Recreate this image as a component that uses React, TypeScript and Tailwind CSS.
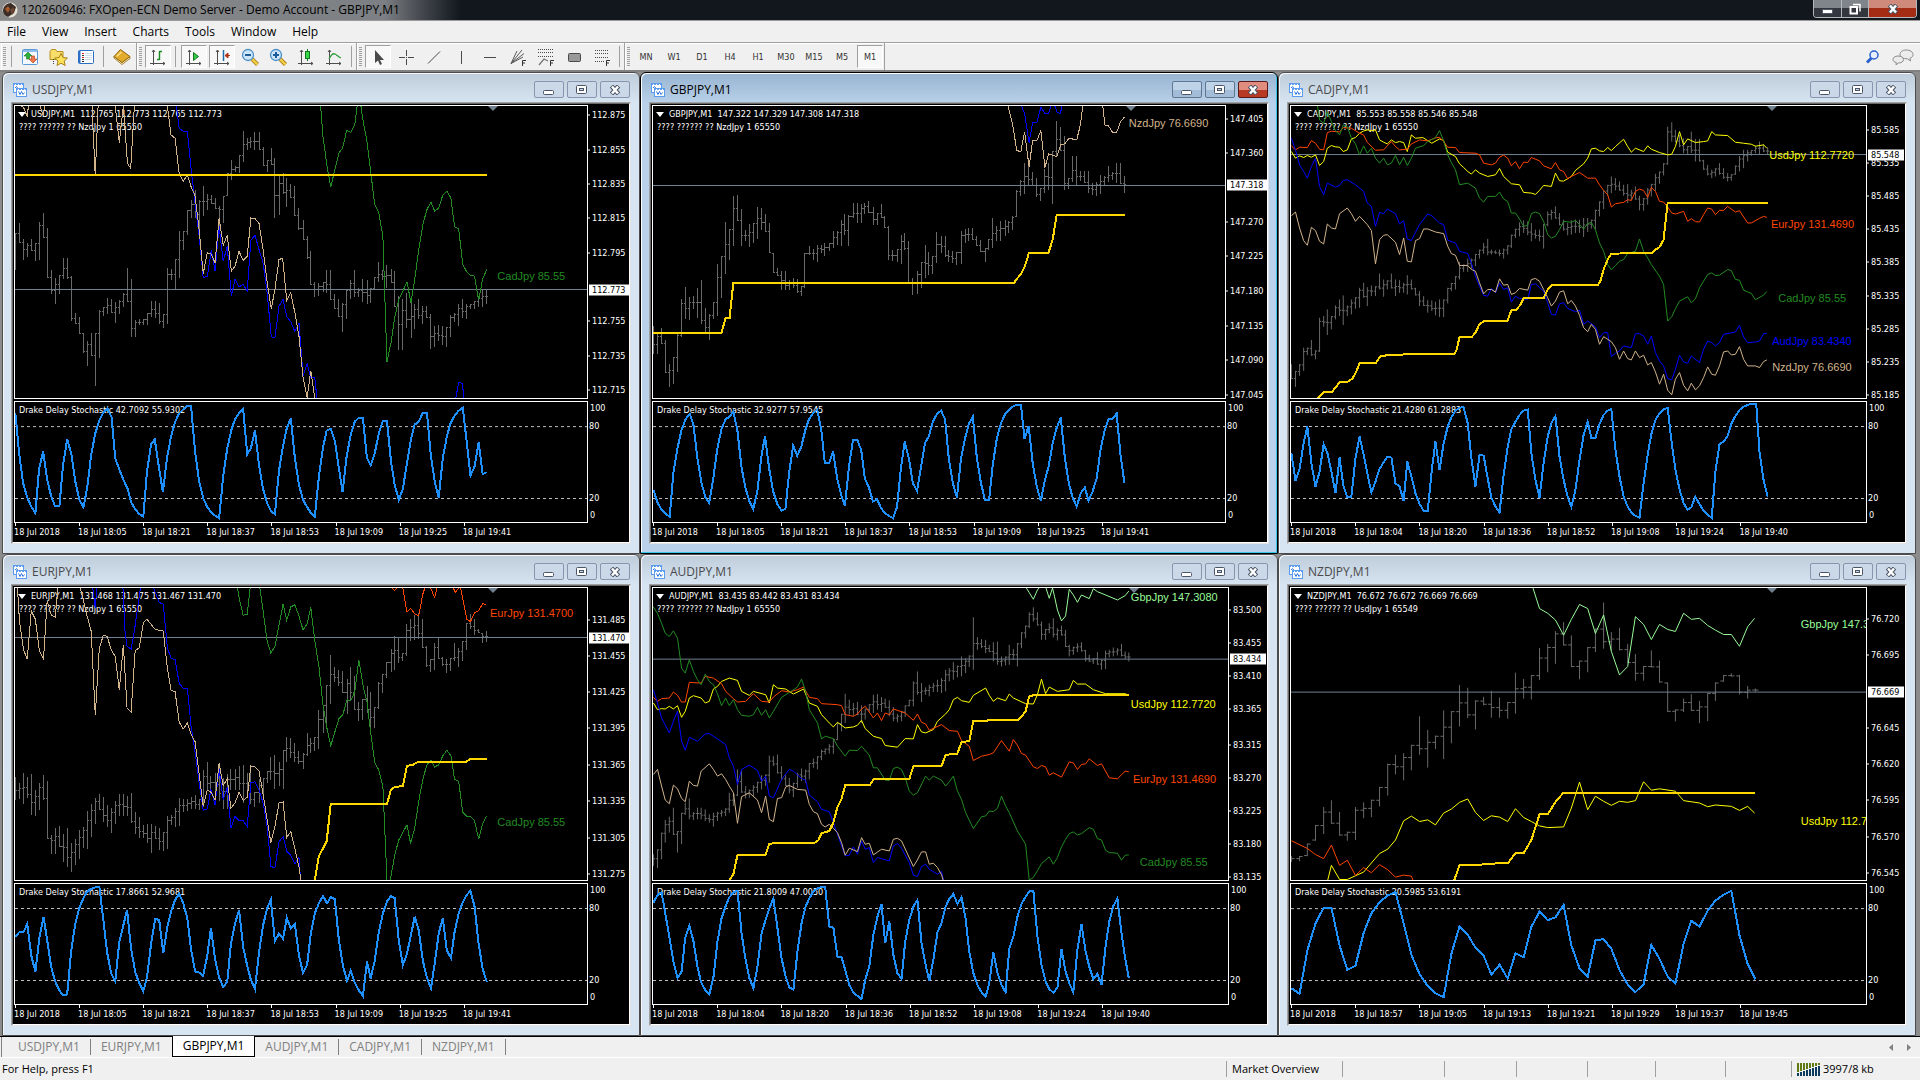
import type { ReactNode } from "react";
import clsx from "clsx";

/* ---------- chart data ---------- */

type Line = { color: string; width?: number; points: string };
type Mark = { text: string; y: number };
type Label = { text: string; color: string; x: number; y: number };

type Chart = {
  symbol: string;
  quote: string;
  note: string;
  stochastic: string;
  active?: boolean;
  // x, y, width, height of the price pane and of the oscillator pane
  view: [number, number, number, number];
  subView: [number, number, number, number];
  step: number;
  bars: string;
  lines: Line[];
  oscillator: string;
  scale: Mark[];
  last: Mark;
  labels: Label[];
  times: string[];
  markerX: number;
};

const GOLD = "#ffd700";
const YELLOW = "#ffff00";
const TAN = "#d2b48c";
const BLUE = "#0000ff";
const GREEN = "#228b22";
const ORANGE = "#ff4500";
const MINT = "#98fb98";

const ODD_TIMES = ["18 Jul 2018", "18 Jul 18:05", "18 Jul 18:21", "18 Jul 18:37", "18 Jul 18:53", "18 Jul 19:09", "18 Jul 19:25", "18 Jul 19:41"];
const EVEN_TIMES = ["18 Jul 2018", "18 Jul 18:04", "18 Jul 18:20", "18 Jul 18:36", "18 Jul 18:52", "18 Jul 19:08", "18 Jul 19:24", "18 Jul 19:40"];
const NZD_TIMES = ["18 Jul 2018", "18 Jul 18:57", "18 Jul 19:05", "18 Jul 19:13", "18 Jul 19:21", "18 Jul 19:29", "18 Jul 19:37", "18 Jul 19:45"];

const CHARTS: Chart[] = [
  {
    symbol: "USDJPY,M1",
    quote: "112.765 112.773 112.765 112.773",
    note: "???? ?????? ?? NzdJpy 1 65550",
    stochastic: "42.7092 55.9302",
    view: [37, 108, 1404, 879],
    subView: [37, 996, 1404, 360],
    step: 9.8,
    bars: "38 490 602;48 460 520;58 508 570;67 520 562;77 508 545;87 520 575;97 457 570;107 430 505;116 475 625;126 600 675;136 625 703;146 615 675;156 565 627;165 565 627;175 620 755;185 730 765;195 742 795;205 790 850;214 815 890;224 790 860;234 790 950;244 722 865;254 712 740;264 686 735;274 688 730;283 697 762;293 693 735;303 672 712;313 595 697;322 630 803;332 752 803;342 748 768;352 748 768;361 730 768;371 695 743;381 695 745;391 700 765;401 733 777;411 595 763;420 597 632;430 567 660;440 485 625;450 485 540;460 420 495;469 390 445;479 362 445;489 390 480;499 348 440;509 373 420;519 375 403;528 385 417;538 408 475;548 378 460;558 310 380;568 270 330;577 290 308;587 256 310;597 183 276;607 205 240;616 200 235;626 187 240;636 187 240;646 232 288;656 270 308;666 235 285;675 265 445;685 315 437;695 310 373;704 325 412;714 342 385;724 350 440;734 415 480;744 450 512;754 500 567;763 545 648;773 637 683;783 640 680;793 637 668;802 600 670;812 600 692;822 673 718;832 690 742;841 700 788;851 660 748;861 632 690;871 600 683;881 655 683;891 630 697;901 632 705;910 655 700;920 623 660;930 578 637;940 600 632;950 585 655;960 597 640;969 603 712;979 680 842;989 690 842;999 672 775;1009 695 805;1018 703 780;1028 690 750;1038 710 765;1048 710 745;1058 735 838;1067 770 833;1077 768 815;1087 770 827;1097 773 832;1107 738 803;1116 730 758;1126 703 770;1136 688 745;1146 703 748;1155 703 718;1165 695 718;1175 680 712;1185 660 712;1195 660 705",
    lines: [
      { color: GREEN, points: "787,107 793,200 803,290 812,352 822,300 832,250 841,235 851,182 861,187 871,165 877,107" },
      { color: GREEN, points: "886,107 891,150 901,215 910,305 920,405 930,430 940,500 950,878 960,820 969,745 979,690 989,665 999,637 1009,700 1018,630 1028,540 1038,465 1048,420 1058,397 1067,424 1077,415 1087,376 1097,364 1107,385 1116,472 1126,477 1136,585 1146,607 1155,618 1165,620 1175,692 1185,628 1195,600" },
      { color: BLUE, points: "433,107 440,175 450,184 460,185 469,295 479,400 489,500 499,625 509,620 519,542 528,605 538,470 548,575 558,530 568,680 577,630 587,652 597,645 607,664 616,512 626,497 636,540 646,580 656,670 666,802 675,806 685,710 695,690 704,742 714,757 724,787 734,760 744,920 754,884 763,925 773,926 778,987" },
      { color: BLUE, points: "1119,987 1126,940 1135,942 1139,987" },
      { color: TAN, points: "50,107 58,112 67,140 70,107" },
      { color: TAN, points: "98,107 106,135 110,107" },
      { color: TAN, points: "226,107 234,318 241,107" },
      { color: TAN, points: "283,107 293,218 303,107 313,280 321,296 330,107" },
      { color: TAN, points: "411,107 420,195 430,205 440,312 450,335 460,315 469,350 479,378 489,480 499,612 509,550 519,554 528,580 538,445 548,527 558,497 568,605 577,590 587,545 597,573 607,560 616,445 626,446 636,462 646,540 656,640 666,718 675,660 685,570 694,566 704,694 714,670 724,730 734,800 744,925 754,985 763,905 773,987" },
      { color: GOLD, width: 2, points: "38,315 1195,315" },
    ],
    oscillator: "38,1030 47,1150 57,1240 67,1283 77,1310 87,1330 96,1198 106,1145 116,1230 126,1280 135,1308 146,1308 155,1185 165,1108 175,1150 185,1235 195,1290 205,1312 214,1255 224,1155 234,1090 244,1052 254,1027 264,1016 274,1042 283,1165 293,1198 303,1230 313,1255 322,1297 332,1318 342,1333 352,1340 361,1205 371,1123 380,1108 390,1190 400,1267 410,1165 420,1100 430,1055 440,1030 450,1018 460,1008 469,1007 479,1145 489,1235 499,1285 509,1312 519,1328 529,1338 538,1345 548,1220 558,1135 568,1080 577,1048 587,1030 597,1016 607,1153 616,1135 626,1082 636,1185 646,1258 656,1300 666,1325 675,1333 685,1202 695,1128 704,1075 714,1044 724,1165 734,1245 744,1290 754,1312 764,1330 773,1340 783,1220 793,1133 802,1082 812,1076 822,1112 832,1195 841,1267 851,1160 861,1095 871,1055 881,1043 891,1044 901,1165 910,1187 920,1150 930,1090 940,1053 950,1053 960,1175 969,1245 979,1290 989,1257 999,1180 1009,1108 1018,1064 1028,1055 1038,1028 1048,1028 1058,1160 1068,1240 1077,1283 1087,1165 1097,1100 1106,1060 1116,1037 1126,1022 1136,1013 1146,1118 1155,1217 1165,1190 1175,1118 1185,1213 1195,1207",
    scale: [
      { text: "112.875", y: 136 },
      { text: "112.855", y: 239 },
      { text: "112.835", y: 343 },
      { text: "112.815", y: 445 },
      { text: "112.795", y: 550 },
      { text: "112.755", y: 754 },
      { text: "112.735", y: 859 },
      { text: "112.715", y: 961 },
    ],
    last: { text: "112.773", y: 661 },
    labels: [{ text: "CadJpy 85.55", color: GREEN, x: 1221, y: 618 }],
    times: ODD_TIMES,
    markerX: 1211,
  },
  {
    symbol: "GBPJPY,M1",
    quote: "147.322 147.329 147.308 147.318",
    note: "???? ?????? ?? NzdJpy 1 65550",
    stochastic: "32.9277 57.9545",
    active: true,
    view: [32, 108, 1404, 879],
    subView: [32, 996, 1404, 360],
    step: 9.8,
    bars: "33 770 855;43 795 855;53 777 825;62 812 912;72 885 952;82 862 943;92 795 908;102 690 803;111 652 750;121 683 752;131 680 720;141 655 745;150 633 765;160 717 792;170 735 812;180 697 750;190 583 740;200 560 687;210 457 612;220 478 572;229 378 530;239 376 455;249 418 528;259 480 515;268 462 533;278 460 520;288 412 507;298 415 480;307 433 487;317 460 550;327 550 610;337 595 620;347 605 662;356 605 662;366 633 663;376 625 655;386 627 672;396 650 680;405 550 655;415 530 555;425 537 572;435 527 577;445 525 550;454 520 560;464 520 545;474 485 535;484 483 527;494 450 530;503 432 497;513 437 530;523 400 445;533 400 460;543 403 460;552 400 432;562 393 430;572 412 467;582 430 467;592 403 445;601 438 475;611 468 572;621 540 575;631 537 577;641 497 583;650 490 540;660 513 645;670 625 678;680 603 675;690 577 655;700 525 625;709 548 615;719 560 613;729 487 580;739 500 550;749 500 562;758 540 577;768 543 580;778 548 585;788 483 583;798 477 520;807 475 515;817 475 512;827 498 530;837 510 547;847 535 578;856 507 540;866 445 535;876 470 513;886 453 515;896 452 500;905 453 490;915 440 480;925 362 443;935 332 380;945 280 373;954 290 350;964 307 350;974 325 383;984 355 395;994 297 370;1003 280 360;1013 243 402;1023 153 260;1033 172 243;1043 198 360;1052 325 357;1062 258 337;1072 258 345;1082 305 335;1092 303 340;1101 305 370;1111 340 375;1121 338 380;1131 317 372;1141 320 350;1150 290 338;1160 307 330;1170 280 340;1180 278 343;1189 318 370",
    lines: [
      { color: BLUE, points: "936,107 944,130 955,218 964,157 974,158 984,112 994,130 1003,130 1009,107" },
      { color: BLUE, points: "1018,107 1024,128 1032,130 1036,107" },
      { color: TAN, points: "903,107 915,165 925,243 935,244 944,185 955,290 964,212 974,213 984,182 994,293 1003,252 1023,260 1033,225 1043,222 1053,205 1072,210 1081,165 1087,107" },
      { color: TAN, points: "1136,107 1141,165 1150,168 1160,187 1170,187 1180,155 1189,141" },
      { color: GOLD, width: 2, points: "33,792 200,792 210,746 220,746 229,642 917,642 926,627 936,612 945,590 955,549 1003,549 1013,510 1023,435 1190,435" },
    ],
    oscillator: "33,1260 43,1298 53,1320 63,1332 73,1340 82,1210 92,1135 102,1080 112,1048 122,1032 131,1062 141,1165 151,1240 161,1283 170,1299 180,1225 190,1135 200,1078 210,1048 220,1040 229,1024 239,1080 249,1190 259,1255 269,1295 278,1318 288,1265 298,1160 307,1098 317,1195 327,1265 337,1302 347,1322 357,1317 366,1210 376,1127 386,1158 396,1130 406,1080 415,1047 425,1030 435,1018 445,1080 454,1180 464,1180 474,1145 484,1225 494,1275 503,1308 513,1190 523,1109 533,1109 543,1140 552,1225 562,1253 572,1295 582,1288 592,1315 601,1330 611,1338 621,1345 631,1312 641,1190 650,1115 660,1165 670,1240 680,1263 690,1190 700,1118 709,1100 719,1055 729,1032 739,1022 749,1048 758,1165 768,1240 778,1283 788,1165 798,1105 807,1062 817,1040 827,1165 837,1240 847,1290 857,1290 866,1185 876,1105 886,1060 896,1033 905,1020 915,1010 925,1004 935,1004 944,1107 954,1068 964,1180 974,1250 984,1293 994,1230 1003,1190 1013,1120 1023,1073 1033,1043 1043,1165 1053,1242 1062,1283 1072,1310 1082,1270 1092,1253 1101,1293 1111,1265 1121,1225 1131,1135 1141,1080 1150,1047 1160,1046 1170,1031 1180,1160 1189,1238",
    scale: [
      { text: "147.405", y: 146 },
      { text: "147.360", y: 250 },
      { text: "147.270", y: 457 },
      { text: "147.225", y: 559 },
      { text: "147.180", y: 664 },
      { text: "147.135", y: 769 },
      { text: "147.090", y: 871 },
      { text: "147.045", y: 976 },
    ],
    last: { text: "147.318", y: 346 },
    labels: [{ text: "NzdJpy 76.6690", color: TAN, x: 1200, y: 160 }],
    times: ODD_TIMES,
    markerX: 1206,
  },
  {
    symbol: "CADJPY,M1",
    quote: "85.553 85.558 85.546 85.548",
    note: "???? ?????? ?? NzdJpy 1 65550",
    stochastic: "21.4280 61.2883",
    view: [27, 108, 1409, 879],
    subView: [27, 996, 1409, 360],
    step: 9.8,
    bars: "28 885 930;38 905 953;48 885 920;58 835 905;67 835 858;77 812 860;87 843 870;97 745 848;107 740 772;116 720 797;126 740 780;136 708 750;146 690 740;155 678 767;165 708 740;175 690 735;185 683 718;195 655 715;205 640 685;214 653 710;224 648 680;234 650 680;244 612 660;254 630 682;263 632 660;273 612 657;283 630 680;293 632 670;303 640 670;312 617 675;322 630 660;332 655 678;342 665 710;352 680 710;362 692 730;372 693 725;381 697 738;391 690 743;401 690 743;411 655 702;420 640 665;430 620 660;440 577 630;450 585 607;460 567 607;469 567 598;479 553 590;489 540 567;499 520 553;509 508 557;518 540 555;528 542 553;538 540 560;548 537 567;558 527 555;567 495 535;577 477 505;587 458 500;597 452 490;607 455 497;616 460 515;626 480 507;636 480 515;646 463 537;656 425 470;665 420 450;675 410 447;685 430 467;695 450 483;705 460 497;714 452 495;724 450 490;734 450 490;744 445 502;754 445 487;763 450 477;773 420 480;783 395 440;793 362 418;803 345 378;812 320 370;822 325 362;832 335 363;842 345 378;852 343 400;861 360 392;871 350 390;881 378 422;891 385 423;901 355 405;910 342 380;920 312 363;930 305 342;940 280 317;950 170 285;960 157 215;969 180 218;979 195 232;989 205 250;999 228 252;1008 185 250;1018 207 275;1028 207 275;1038 270 300;1048 285 317;1058 300 325;1067 295 320;1077 280 315;1087 295 327;1097 310 335;1106 313 333;1116 287 315;1126 258 305;1136 240 295;1146 240 275;1155 240 258;1165 227 250;1175 215 255;1185 222 247;1195 232 255",
    lines: [
      { color: YELLOW, points: "28,245 38,265 48,258 58,263 67,257 77,262 87,255 97,287 107,275 116,235 126,227 136,231 146,232 155,245 165,240 175,207 185,203 195,190 205,183 214,180 224,182 234,180 244,210 254,217 263,222 273,210 283,218 293,215 303,218 312,245 322,195 332,205 350,203 362,212 372,220 391,207 401,212 411,247 430,260 440,282 450,293 460,305 469,313 479,300 489,310 509,320 528,315 538,296 548,320 567,342 587,345 597,368 616,370 626,374 636,362 646,347 665,350 675,310 685,333 695,334 714,320 724,302 744,282 754,265 763,237 773,235 783,243 793,245 803,233 812,242 822,230 842,208 852,230 861,247 871,235 891,245 901,228 910,238 930,248 950,255 960,253 969,230 979,185 989,225 999,207 1018,218 1038,215 1048,213 1058,185 1067,195 1097,197 1116,217 1136,220 1155,223 1165,229 1185,225 1193,235" },
      { color: ORANGE, points: "28,228 38,240 48,232 67,233 77,212 87,220 97,238 107,240 116,188 126,184 146,186 155,173 175,175 195,190 205,195 214,218 234,241 254,240 273,215 283,230 293,240 312,238 322,222 342,210 362,213 381,204 391,202 401,215 411,232 430,233 440,248 479,250 489,255 499,280 518,285 528,280 538,262 548,256 558,265 567,288 577,275 587,297 597,277 607,278 616,263 636,273 646,288 665,297 675,278 685,300 695,305 705,327 714,320 734,308 754,325 773,325 783,345 793,362 803,375 812,412 822,402 842,398 852,390 861,392 871,365 881,358 891,362 901,383 910,353 920,365 930,395 940,397 950,412 960,430 969,433 989,425 999,455 1008,447 1018,456 1028,457 1038,435 1048,415 1058,418 1067,435 1077,422 1087,422 1097,410 1116,427 1126,423 1146,460 1155,460 1175,446 1185,440 1193,443" },
      { color: GREEN, points: "92,108 97,150 107,160 116,125 126,155 136,182 146,195 155,165 165,170 175,205 185,222 195,255 205,228 214,250 224,235 234,265 244,280 254,265 263,285 273,280 283,257 293,285 303,262 312,287 322,265 332,235 352,227 362,215 381,203 391,182 401,213 411,255 420,278 430,300 440,345 460,340 479,355 489,385 499,397 509,380 528,380 538,367 548,388 558,395 567,430 577,430 587,448 597,470 607,467 616,432 626,427 636,432 646,455 656,495 665,505 675,500 685,480 695,455 714,458 724,452 744,478 754,462 763,458 773,480 783,520 793,545 803,585 812,601 822,588 832,575 842,570 852,552 871,545 881,508 891,545 901,565 910,585 930,620 940,645 950,755 960,742 969,718 979,695 999,682 1008,700 1018,688 1028,655 1048,615 1058,610 1067,618 1077,617 1097,600 1106,603 1116,630 1126,632 1136,662 1155,672 1165,691 1185,677 1193,666" },
      { color: BLUE, points: "28,205 38,240 48,285 58,305 67,325 77,290 87,265 97,350 107,375 116,340 136,352 146,347 155,332 165,330 185,345 205,365 214,400 224,410 234,470 244,428 254,432 263,418 283,432 293,463 303,453 312,508 322,513 332,488 342,465 362,433 372,438 391,460 401,465 411,512 430,520 440,545 460,552 469,580 479,620 489,650 499,678 509,680 518,657 528,670 538,640 548,660 558,655 567,698 577,680 587,687 607,690 616,645 626,643 646,665 656,700 665,735 675,737 685,703 695,700 705,717 724,727 734,722 744,765 754,755 773,772 783,805 793,790 803,790 812,862 822,852 832,845 842,830 861,835 871,793 881,793 891,800 901,825 910,800 920,850 930,875 940,890 950,928 960,932 969,900 979,858 989,878 999,882 1008,860 1028,880 1038,840 1048,815 1058,820 1067,830 1077,820 1087,795 1116,788 1126,768 1136,803 1146,820 1165,818 1175,815 1185,793 1193,792" },
      { color: TAN, points: "28,438 38,427 48,475 58,513 67,527 77,473 87,483 97,515 107,523 116,463 126,475 136,478 146,432 165,415 175,432 185,455 195,440 214,465 224,483 234,583 244,510 254,497 263,495 283,518 293,555 303,505 312,575 322,577 332,513 342,507 352,478 362,478 381,487 401,492 411,530 420,552 430,557 440,588 460,588 469,600 479,605 489,640 499,673 509,660 518,660 528,668 538,628 548,647 558,645 567,675 577,670 587,657 607,662 616,630 626,627 636,635 646,660 656,685 665,710 675,695 685,668 695,664 705,703 714,693 724,710 734,738 744,775 754,787 763,765 773,780 783,825 793,802 812,817 822,835 832,870 842,845 852,868 861,872 871,845 881,865 891,858 901,887 910,880 920,908 930,945 940,915 950,963 960,977 969,930 979,910 989,948 999,965 1008,942 1018,962 1028,950 1038,925 1048,893 1058,915 1067,918 1077,890 1087,848 1097,845 1106,857 1116,855 1126,832 1136,870 1146,890 1165,890 1175,895 1185,877 1193,872" },
      { color: GOLD, width: 2, points: "92,987 107,969 128,968 146,939 167,937 178,927 187,908 195,882 235,881 246,861 262,858 312,855 427,854 432,845 440,804 470,803 479,790 489,764 499,756 557,755 567,723 579,721 588,708 597,687 646,686 656,660 666,648 778,648 785,635 793,600 803,570 812,552 910,551 920,540 930,533 940,510 950,399 1195,399" },
    ],
    oscillator: "28,1150 38,1232 48,1197 58,1120 67,1070 77,1180 87,1250 97,1205 107,1123 116,1148 126,1205 136,1270 146,1163 155,1245 165,1282 175,1280 185,1165 195,1100 205,1155 214,1210 224,1268 234,1235 244,1197 263,1160 273,1163 283,1240 293,1250 303,1293 312,1175 322,1220 332,1270 342,1302 352,1323 362,1323 372,1200 381,1115 391,1200 401,1120 411,1070 420,1042 430,1022 440,1013 450,1012 460,1060 469,1165 479,1250 489,1155 499,1157 509,1225 518,1283 528,1310 538,1328 548,1215 558,1130 567,1078 577,1055 587,1035 597,1022 607,1019 616,1150 626,1230 636,1283 646,1180 656,1100 665,1060 675,1038 685,1160 695,1230 705,1280 714,1311 724,1260 734,1170 744,1095 754,1055 763,1104 773,1104 783,1062 793,1035 803,1022 812,1017 822,1140 832,1220 842,1280 852,1310 861,1328 871,1338 881,1344 891,1240 901,1155 910,1092 920,1050 930,1030 940,1018 950,1014 960,1120 969,1200 979,1258 989,1300 999,1320 1008,1312 1018,1281 1028,1303 1038,1322 1048,1335 1058,1344 1067,1205 1077,1123 1087,1115 1097,1098 1106,1062 1116,1038 1126,1020 1136,1010 1146,1005 1155,1001 1167,1001 1175,1145 1185,1230 1195,1280",
    scale: [
      { text: "85.585", y: 181 },
      { text: "85.535", y: 280 },
      { text: "85.485", y: 379 },
      { text: "85.435", y: 478 },
      { text: "85.385", y: 577 },
      { text: "85.335", y: 679 },
      { text: "85.285", y: 778 },
      { text: "85.235", y: 877 },
      { text: "85.185", y: 976 },
    ],
    last: { text: "85.548", y: 254 },
    labels: [
      { text: "UsdJpy 112.7720", color: YELLOW, x: 1199, y: 256 },
      { text: "EurJpy 131.4690", color: ORANGE, x: 1203, y: 463 },
      { text: "CadJpy 85.55", color: GREEN, x: 1221, y: 685 },
      { text: "AudJpy 83.4340", color: BLUE, x: 1206, y: 814 },
      { text: "NzdJpy 76.6690", color: TAN, x: 1206, y: 892 },
    ],
    times: EVEN_TIMES,
    markerX: 1206,
  },
  {
    symbol: "EURJPY,M1",
    quote: "131.468 131.475 131.467 131.470",
    note: "???? ?????? ?? NzdJpy 1 65550",
    stochastic: "17.8661 52.9681",
    view: [37, 112, 1404, 867],
    subView: [37, 988, 1404, 355],
    step: 9.8,
    bars: "38 672 742;48 690 737;58 660 752;67 673 735;77 665 787;87 710 790;97 690 770;107 667 740;116 685 858;126 845 902;136 825 900;146 818 880;155 843 925;165 825 940;175 870 955;185 857 935;195 830 917;205 820 885;214 775 887;224 752 850;234 735 812;244 722 770;254 733 805;263 755 820;273 765 838;283 745 812;293 723 790;303 723 788;312 730 788;322 720 808;332 778 842;342 793 855;352 815 855;361 813 870;371 813 898;381 817 857;391 825 890;401 835 893;411 790 887;420 787 815;430 765 820;440 735 818;450 737 778;460 737 775;469 733 768;479 725 768;489 737 770;499 652 763;509 627 715;518 670 712;528 660 718;538 643 745;548 675 768;558 665 768;567 650 712;577 650 710;587 640 710;597 637 750;607 662 722;616 645 752;626 717 762;636 680 750;646 675 722;656 655 690;665 613 683;675 608 708;685 627 700;695 592 708;704 553 628;714 558 617;724 573 627;734 597 635;744 603 650;754 543 610;763 557 602;773 553 595;783 475 590;793 460 543;802 400 515;812 312 455;822 347 390;832 355 402;842 358 425;852 382 487;861 347 445;871 372 475;881 450 507;891 440 505;901 402 483;910 420 525;920 465 527;930 390 470;940 368 425;950 332 380;960 292 362;969 255 355;979 257 335;989 305 330;999 220 315;1008 205 270;1018 193 265;1028 187 262;1038 205 290;1048 283 347;1058 323 360;1067 275 355;1077 258 322;1087 318 342;1097 322 363;1106 320 358;1116 275 328;1126 290 345;1136 270 330;1146 215 295;1155 190 235;1165 205 250;1175 233 245;1185 245 275;1195 240 272",
    lines: [
      { color: GREEN, points: "583,112 587,140 597,193 607,190 614,112" },
      { color: GREEN, points: "638,112 646,180 656,270 665,305 675,285 685,222 695,160 704,208 714,168 724,162 734,195 744,237 754,218 763,170 773,270 783,345 793,460 803,530 812,580 822,540 832,500 842,487 852,443 861,447 871,420 881,325 891,400 901,450 910,540 920,630 930,652 940,700 950,979 958,979 969,905 979,860 999,815 1008,870 1018,825 1028,745 1038,680 1048,637 1058,622 1067,643 1077,637 1087,610 1097,593 1107,610 1116,680 1126,686 1136,777 1146,790 1155,791 1165,802 1175,857 1185,810 1195,788" },
      { color: BLUE, points: "228,112 234,170 238,112" },
      { color: BLUE, points: "302,112 307,240 312,285 322,293 330,240 338,170 345,112" },
      { color: BLUE, points: "377,112 391,155 401,160 411,290 420,320 430,325 440,395 450,410 460,410 469,520 479,600 489,690 499,772 509,768 518,710 528,755 538,650 548,740 558,702 567,825 577,790 587,802 597,803 607,820 616,690 626,687 636,712 646,750 656,820 665,938 675,943 685,865 695,850 704,893 714,905 724,930 734,910 738,979" },
      { color: TAN, points: "43,112 48,210 58,295 67,323 77,180 87,205 97,300 107,322 116,150 126,193 136,198 142,112" },
      { color: TAN, points: "197,112 205,150 214,195 224,240 234,490 244,290 254,252 263,255 273,295 283,315 293,415 303,280 312,468 322,480 332,297 342,290 352,215 361,205 381,235 401,240 411,350 420,415 430,420 440,510 450,530 460,513 469,545 479,568 489,665 499,760 509,712 518,718 528,740 538,632 548,698 558,678 567,765 577,750 587,718 597,743 607,733 616,640 626,643 636,655 646,725 656,800 665,868 675,820 685,750 695,747 704,852 714,835 724,885 734,940 739,979" },
      { color: ORANGE, points: "963,112 969,120 974,112" },
      { color: ORANGE, points: "989,112 999,183 1008,172 1018,188 1028,195 1038,130 1043,112" },
      { color: ORANGE, points: "1057,112 1067,140 1073,112" },
      { color: ORANGE, points: "1113,112 1118,125 1126,112" },
      { color: ORANGE, points: "1131,112 1146,205 1155,212 1165,185 1175,180 1185,158 1193,161" },
      { color: GOLD, width: 2, points: "773,979 783,907 793,885 802,863 812,754 950,753 960,710 970,702 989,700 999,640 1013,637 1028,627 1145,627 1156,618 1195,618" },
    ],
    oscillator: "38,1145 48,1130 58,1130 67,1107 77,1200 87,1248 97,1145 107,1085 116,1155 126,1235 136,1278 146,1303 155,1318 165,1315 175,1185 185,1105 195,1058 205,1030 214,1010 224,1003 234,998 244,996 254,1095 263,1190 273,1252 283,1277 293,1160 303,1110 312,1065 322,1180 332,1248 342,1282 352,1305 361,1265 371,1165 381,1091 391,1095 401,1193 411,1115 420,1070 430,1035 440,1017 450,1045 460,1090 469,1180 479,1247 489,1250 499,1260 509,1200 518,1118 528,1210 538,1265 548,1293 558,1278 567,1165 577,1105 587,1065 597,1175 607,1230 616,1272 626,1299 636,1190 646,1110 656,1060 665,1035 675,1157 685,1135 695,1150 704,1088 714,1120 724,1107 734,1200 744,1252 754,1228 763,1135 773,1075 783,1045 793,1024 803,1045 812,1027 822,1033 832,1155 842,1230 852,1275 861,1245 871,1280 881,1303 891,1320 901,1218 910,1268 920,1215 930,1130 940,1075 950,1040 960,1024 969,1030 979,1155 989,1228 999,1195 1008,1145 1018,1085 1028,1125 1038,1215 1048,1265 1058,1297 1067,1225 1077,1135 1087,1088 1097,1185 1107,1207 1116,1130 1126,1075 1136,1042 1146,1020 1155,1008 1165,1055 1175,1165 1185,1240 1195,1278",
    scale: [
      { text: "131.485", y: 206 },
      { text: "131.455", y: 313 },
      { text: "131.425", y: 421 },
      { text: "131.395", y: 528 },
      { text: "131.365", y: 637 },
      { text: "131.335", y: 744 },
      { text: "131.305", y: 853 },
      { text: "131.275", y: 960 },
    ],
    last: { text: "131.470", y: 259 },
    labels: [
      { text: "EurJpy 131.4700", color: ORANGE, x: 1203, y: 185 },
      { text: "CadJpy 85.55", color: GREEN, x: 1221, y: 806 },
    ],
    times: ODD_TIMES,
    markerX: 1211,
  },
  {
    symbol: "AUDJPY,M1",
    quote: "83.435 83.442 83.431 83.434",
    note: "???? ?????? ?? NzdJpy 1 65550",
    stochastic: "21.8009 47.0050",
    view: [32, 114, 1409, 879],
    subView: [32, 1002, 1409, 360],
    step: 9.8,
    bars: "33 915 950;43 900 957;53 850 930;62 812 880;72 802 850;82 775 857;92 845 910;102 790 885;111 760 797;121 747 810;131 788 812;141 775 810;150 775 810;160 780 815;170 795 820;180 790 832;190 787 815;200 782 802;210 777 800;219 730 790;229 735 770;239 660 740;249 663 730;259 710 747;268 720 745;278 707 740;288 697 730;298 677 720;308 675 710;317 618 700;327 620 650;337 615 672;347 650 690;357 677 710;366 685 732;376 700 743;386 670 715;396 657 695;406 660 700;415 640 690;425 627 655;435 620 660;445 600 632;454 597 615;464 583 612;474 568 613;484 520 572;494 492 545;503 432 520;513 450 495;523 460 500;533 457 497;543 467 520;552 477 510;562 463 487;572 435 490;582 433 480;592 442 487;601 447 475;611 452 500;621 472 515;631 493 518;641 485 515;650 467 502;660 450 470;670 395 470;680 365 435;690 400 457;700 413 435;709 405 440;719 400 427;729 390 427;739 385 430;749 360 425;758 355 395;768 337 390;778 347 383;788 320 380;798 325 370;807 317 352;817 202 360;827 262 300;837 268 295;847 270 310;856 285 307;866 277 335;876 275 345;886 320 350;896 320 347;905 285 345;915 298 330;925 280 350;935 247 295;945 227 265;954 187 235;964 172 215;974 187 227;984 215 270;994 237 270;1003 220 250;1013 205 263;1023 235 272;1033 227 257;1043 240 292;1052 285 320;1062 290 315;1072 280 307;1082 277 305;1092 300 335;1101 315 337;1111 325 343;1121 307 345;1131 330 360;1141 302 358;1150 300 323;1160 293 320;1170 295 317;1180 282 320;1189 305 328;1198 308 335",
    lines: [
      { color: MINT, points: "947,114 954,128 964,148 974,120 978,114" },
      { color: MINT, points: "995,114 1003,145 1011,114 1016,140 1023,180 1033,213 1043,198 1052,118 1062,135 1072,157 1082,135 1101,146 1111,116 1121,125 1141,135 1170,150 1189,137 1198,123" },
      { color: YELLOW, points: "33,460 43,480 53,477 62,478 72,470 82,478 92,468 102,503 111,485 121,445 131,438 150,445 160,460 170,455 180,418 190,410 200,395 219,385 239,392 249,425 268,437 278,425 308,435 317,460 327,405 337,415 357,418 376,433 401,418 415,460 435,470 445,495 464,520 474,532 484,518 503,535 523,532 533,527 543,512 552,537 572,560 592,567 601,588 631,593 650,567 670,568 680,525 690,547 700,550 719,540 729,515 749,493 758,480 768,450 778,443 788,453 807,458 817,437 847,415 856,437 866,455 876,445 896,453 905,433 915,445 945,462 964,463 974,435 984,388 994,432 1003,412 1023,425 1052,420 1062,392 1072,403 1092,403 1111,420 1141,432 1189,432 1198,437" },
      { color: ORANGE, points: "33,443 43,455 53,447 72,445 82,427 92,437 102,457 111,457 121,398 150,400 160,380 180,385 200,402 210,425 229,447 239,457 259,455 278,432 298,455 317,457 327,442 347,423 366,427 386,420 401,412 415,443 435,447 445,462 484,465 494,468 503,495 523,500 533,493 543,478 552,470 572,505 582,490 592,513 601,490 611,495 621,478 650,490 670,512 680,493 690,518 700,523 709,542 739,525 758,543 778,545 788,573 807,590 817,633 837,620 856,615 866,610 886,573 896,590 905,605 915,570 925,587 935,612 945,617 964,652 974,657 984,648 994,652 1003,677 1013,670 1033,683 1052,637 1062,640 1072,660 1082,645 1092,643 1101,628 1121,648 1131,643 1150,685 1170,688 1189,665 1198,667" },
      { color: GREEN, points: "32,170 43,190 53,220 62,250 72,260 82,243 92,265 102,355 111,370 121,330 131,365 141,390 150,405 160,373 170,395 180,405 190,432 200,468 210,445 219,468 229,450 239,480 249,497 268,500 278,495 288,473 298,497 308,480 317,505 327,485 347,443 366,428 386,412 396,388 406,425 415,480 435,520 445,568 454,560 474,567 484,590 503,620 513,602 533,603 543,590 562,617 572,655 582,655 601,692 611,693 621,657 631,653 641,660 650,685 660,725 670,737 680,730 700,680 709,692 719,680 739,692 749,710 758,697 768,680 778,725 788,750 798,790 817,838 837,802 847,800 856,785 866,787 876,777 886,740 896,770 905,790 925,845 945,885 954,993 964,985 974,965 984,943 1003,923 1013,945 1023,925 1033,893 1043,870 1052,853 1062,848 1072,857 1082,853 1101,835 1111,840 1121,868 1131,872 1141,903 1150,910 1170,912 1180,933 1189,918 1198,917" },
      { color: BLUE, points: "33,420 43,460 53,505 72,550 82,515 92,485 102,575 111,602 121,563 141,575 160,553 170,552 190,568 210,585 219,625 229,650 239,705 249,660 268,647 288,663 298,695 308,680 317,740 327,745 347,690 366,660 376,665 396,687 406,692 415,737 435,757 445,780 464,787 474,820 484,855 503,920 513,918 523,893 533,915 543,875 552,900 562,895 572,940 582,925 611,935 621,890 631,883 641,897 660,940 670,978 680,982 690,952 700,945 709,960 729,975 739,967 744,993" },
      { color: TAN, points: "33,675 43,660 53,710 62,752 72,763 82,707 92,718 102,747 111,757 121,695 131,708 141,710 150,665 170,643 180,660 190,680 200,673 210,690 219,710 229,730 239,822 249,742 268,730 288,752 298,790 308,740 317,810 327,817 337,747 347,745 357,713 366,708 386,720 406,722 415,765 425,787 435,793 445,825 454,833 464,825 474,837 484,850 494,880 503,918 513,897 533,907 543,865 552,885 562,882 572,917 592,900 611,905 621,870 631,867 641,875 670,952 680,932 690,908 700,908 709,945 719,942 729,955 739,977 743,993" },
      { color: GOLD, width: 2, points: "219,993 229,975 239,917 308,917 317,884 327,882 427,881 437,873 445,852 464,845 474,820 484,773 494,748 503,708 563,708 572,690 660,689 670,651 739,650 749,616 778,612 788,577 807,575 817,513 925,512 935,502 945,485 954,440 970,435 1198,435" },
    ],
    oscillator: "33,1058 43,1035 53,1027 62,1090 72,1160 82,1235 92,1285 102,1265 111,1163 121,1128 131,1173 141,1250 150,1298 160,1320 170,1334 180,1283 190,1175 200,1105 210,1068 219,1042 229,1028 239,1022 249,1150 259,1230 268,1285 278,1315 288,1250 298,1150 308,1110 317,1075 327,1046 337,1135 347,1225 357,1280 366,1312 376,1320 386,1205 396,1120 406,1070 415,1045 425,1025 435,1015 445,1011 454,1012 464,1130 474,1133 484,1220 494,1222 503,1260 513,1305 523,1328 543,1348 552,1290 562,1250 572,1155 582,1100 592,1062 601,1180 611,1113 621,1215 631,1270 641,1287 650,1175 660,1110 670,1070 680,1050 690,1180 700,1245 709,1293 719,1230 729,1147 739,1120 749,1070 758,1047 768,1032 778,1062 788,1042 798,1105 807,1205 817,1270 827,1305 837,1327 847,1341 856,1300 866,1208 876,1268 886,1305 896,1327 905,1197 915,1160 925,1100 935,1062 945,1040 954,1024 964,1022 974,1160 984,1245 994,1295 1003,1317 1013,1329 1023,1313 1033,1197 1043,1265 1052,1300 1062,1327 1072,1200 1082,1122 1092,1205 1101,1250 1111,1288 1121,1272 1131,1305 1141,1190 1150,1115 1160,1068 1170,1046 1180,1150 1189,1225 1198,1285",
    scale: [
      { text: "83.500", y: 181 },
      { text: "83.455", y: 280 },
      { text: "83.410", y: 379 },
      { text: "83.365", y: 478 },
      { text: "83.315", y: 586 },
      { text: "83.270", y: 685 },
      { text: "83.225", y: 784 },
      { text: "83.180", y: 883 },
      { text: "83.135", y: 982 },
    ],
    last: { text: "83.434", y: 328 },
    labels: [
      { text: "GbpJpy 147.3080", color: MINT, x: 1203, y: 142 },
      { text: "UsdJpy 112.7720", color: YELLOW, x: 1203, y: 463 },
      { text: "EurJpy 131.4690", color: ORANGE, x: 1208, y: 688 },
      { text: "CadJpy 85.55", color: GREEN, x: 1225, y: 937 },
    ],
    times: EVEN_TIMES,
    markerX: 1211,
  },
  {
    symbol: "NZDJPY,M1",
    quote: "76.672 76.672 76.669 76.669",
    note: "???? ?????? ?? UsdJpy 1 65549",
    stochastic: "20.5985 53.6191",
    view: [27, 112, 1409, 867],
    subView: [27, 988, 1409, 355],
    step: 19.6,
    bars: "28 908 925;48 907 923;67 870 908;87 815 862;107 762 842;126 742 812;146 777 847;165 835 862;185 762 860;205 748 795;224 740 792;244 702 760;264 633 728;283 607 665;303 602 683;322 577 653;342 493 607;362 533 645;381 550 590;401 475 620;420 477 573;440 400 523;460 408 498;479 445 532;499 435 460;518 417 497;538 437 497;558 450 500;577 363 485;597 382 440;616 370 443;636 290 385;656 278 362;675 240 337;695 213 283;714 253 347;734 327 383;754 287 362;773 232 302;793 155 292;812 243 300;832 230 297;852 278 335;871 308 387;891 343 387;910 297 348;930 327 393;950 392 480;969 472 508;989 440 480;1008 427 477;1028 447 513;1048 423 507;1067 392 447;1087 370 390;1106 365 375;1126 370 428;1146 403 440;1165 410 420",
    lines: [
      { color: MINT, points: "620,112 636,173 656,187 675,207 695,252 714,205 734,161 754,173 773,247 793,192 812,300 832,370 852,345 871,197 891,220 910,265 930,220 950,235 969,241 989,187 1008,205 1028,202 1048,223 1067,237 1087,250 1106,250 1126,285 1146,227 1163,202" },
      { color: YELLOW, points: "117,979 126,935 146,977 165,977 205,955 224,928 244,900 264,887 283,860 303,803 322,789 342,805 362,800 381,815 401,780 420,768 440,748 460,738 479,778 499,802 518,788 538,792 558,805 577,767 597,793 616,805 636,818 656,823 695,821 714,765 734,688 754,770 773,730 793,745 812,757 832,745 852,748 871,743 891,687 910,712 930,708 969,715 989,743 1028,750 1048,761 1067,756 1106,760 1126,772 1146,760 1163,780" },
      { color: ORANGE, points: "28,862 67,885 87,903 107,915 126,875 146,935 165,920 185,965 205,942 224,957 244,933 264,948 283,970 303,964 322,967 326,979" },
      { color: GOLD, width: 2, points: "427,979 440,935 489,934 505,930 558,929 577,899 597,899 616,860 636,784 656,784 675,747 695,719 1165,719" },
    ],
    oscillator: "28,1297 48,1313 67,1185 87,1105 107,1058 126,1058 146,1170 165,1242 185,1230 205,1133 224,1075 244,1042 264,1022 283,1012 303,1105 322,1198 342,1255 362,1290 381,1312 401,1323 420,1195 440,1113 460,1138 479,1177 499,1200 518,1257 538,1227 558,1268 577,1193 597,1205 616,1115 636,1070 656,1095 675,1087 695,1050 714,1170 734,1238 754,1263 773,1155 793,1151 812,1180 832,1243 852,1285 871,1308 891,1285 910,1168 930,1210 950,1262 969,1283 989,1165 1008,1097 1028,1114 1048,1067 1067,1037 1087,1020 1106,1008 1126,1140 1146,1225 1165,1271",
    scale: [
      { text: "76.720", y: 203 },
      { text: "76.695", y: 310 },
      { text: "76.645", y: 526 },
      { text: "76.620", y: 634 },
      { text: "76.595", y: 741 },
      { text: "76.570", y: 850 },
      { text: "76.545", y: 957 },
    ],
    last: { text: "76.669", y: 421 },
    labels: [
      { text: "GbpJpy 147.3080", color: MINT, x: 1276, y: 220 },
      { text: "UsdJpy 112.7720", color: YELLOW, x: 1276, y: 803 },
    ],
    times: NZD_TIMES,
    markerX: 1206,
  },
];

/* ---------- chart drawing ---------- */

// One path for all OHLC bars: high-low stem, open tick left, close tick right
function barPath(bars: string, step: number) {
  const tick = step * 0.4;
  const list = bars.split(";").map((b) => b.split(" ").map(Number));
  let close = (list[0][1] + list[0][2]) / 2;
  return list
    .map(([x, hi, lo], i) => {
      const clamp = (v: number) => Math.min(lo - 2, Math.max(hi + 2, v));
      const next = list[i + 1] ?? list[i];
      const open = clamp(close);
      close = clamp((next[1] + next[2]) / 2);
      return `M${x} ${hi}V${lo}M${x - tick} ${open}H${x}M${x} ${close}H${x + tick}`;
    })
    .join("");
}

const pct = (value: number, start: number, size: number) => `${((value - start) / size) * 100}%`;

function Pane({ view, children }: { view: number[]; children: ReactNode }) {
  return (
    <svg
      className="absolute inset-0 size-full"
      viewBox={view.join(" ")}
      preserveAspectRatio="none"
      shapeRendering="crispEdges"
      fill="none"
    >
      {children}
    </svg>
  );
}

function Polyline({ points, color, width = 1 }: Line) {
  return <polyline points={points} stroke={color} strokeWidth={width} vectorEffect="non-scaling-stroke" />;
}

function ChartArea({ chart }: { chart: Chart }) {
  const [vx, vy, vw, vh] = chart.view;
  const [sx, sy, sw, sh] = chart.subView;
  const wide = chart.last.text.length === 6;

  return (
    <div
      className={clsx(
        "flex flex-1 flex-col overflow-hidden border border-t-[#696969] border-l-[#696969] border-r-white border-b-white bg-black pt-px pl-px font-['DejaVu_Sans_Condensed','DejaVu_Sans',sans-serif] text-[9px] leading-[11px] text-white",
        wide ? "pr-[38px]" : "pr-[41px]",
      )}
    >
      {/* Price pane */}
      <div className="relative min-h-[200px] flex-[295] border border-white">
        <div className="absolute inset-0 overflow-hidden">
          <Pane view={chart.view}>
            <path d={barPath(chart.bars, chart.step)} stroke="#696969" vectorEffect="non-scaling-stroke" />
            <path d={`M${vx} ${chart.last.y}h${vw}`} stroke="#708090" vectorEffect="non-scaling-stroke" />
          </Pane>
          <div className="absolute top-[3px] left-[3px] flex items-center gap-[5px] whitespace-pre">
            <svg className="h-[5px] w-[8px]" viewBox="0 0 8 5">
              <path d="M0 0h8L4 5z" fill="#fff" />
            </svg>
            <span>{`${chart.symbol}  ${chart.quote}`}</span>
          </div>
          <div className="absolute top-[16px] left-[4px] whitespace-pre">{chart.note}</div>
          <Pane view={chart.view}>
            {chart.lines.map((line) => (
              <Polyline key={line.points} {...line} />
            ))}
          </Pane>
          <svg
            className="absolute top-0 -ml-[5px] h-[5px] w-[10px]"
            viewBox="0 0 10 5"
            style={{ left: pct(chart.markerX, vx, vw) }}
          >
            <path d="M0 0h10L5 5z" fill="#708090" />
          </svg>
          {chart.labels.map((label) => (
            <span
              key={label.text}
              className="absolute -translate-y-1/2 font-['Liberation_Sans',Arial,sans-serif] text-[11px] leading-[12px] whitespace-nowrap"
              style={{ left: pct(label.x, vx, vw), top: pct(label.y, vy, vh), color: label.color }}
            >
              {label.text}
            </span>
          ))}
        </div>

        {/* Price scale */}
        {chart.scale.map((mark) => (
          <span
            key={mark.text}
            className="absolute left-full flex -translate-y-1/2 items-center gap-[2px]"
            style={{ top: pct(mark.y, vy, vh) }}
          >
            <i className="h-px w-[3px] bg-white" />
            {mark.text}
          </span>
        ))}
        <span
          className={clsx("absolute left-full ml-[2px] -translate-y-1/2 bg-white pl-[3px] text-black", wide ? "w-[36px]" : "w-[40px]")}
          style={{ top: pct(chart.last.y, vy, vh) }}
        >
          {chart.last.text}
        </span>
      </div>

      {/* Oscillator pane */}
      <div className="relative mt-[2px] min-h-[80px] flex-[121] border border-white">
        <span className="absolute top-[3px] left-[4px] whitespace-nowrap">Drake Delay Stochastic {chart.stochastic}</span>
        <Pane view={chart.subView}>
          {[0.2, 0.8].map((level) => (
            <path
              key={level}
              d={`M${sx} ${sy + sh * level + 2}h${sw}`}
              stroke="#c0c0c0"
              strokeDasharray="3 3"
              vectorEffect="non-scaling-stroke"
            />
          ))}
          <Polyline points={chart.oscillator} color="#1e90ff" width={2} />
        </Pane>
        <div className="absolute top-0 left-full flex h-full flex-col justify-between py-px pl-[3px]">
          <span>100</span>
          <span>0</span>
        </div>
        <span className="absolute top-[20%] left-full -translate-y-1/2 pl-[2px]">80</span>
        <span className="absolute top-[80%] left-full -translate-y-1/2 pl-[2px]">20</span>
      </div>

      {/* Time scale */}
      <div className="relative h-[19px] shrink-0">
        {chart.times.map((time, i) => (
          <span key={time} className="absolute top-0 flex flex-col gap-px whitespace-nowrap" style={{ left: pct(vx + i * 156.8, vx, vw) }}>
            <i className="ml-px h-[3px] w-px bg-white" />
            {time}
          </span>
        ))}
      </div>
    </div>
  );
}

/* ---------- chart windows ---------- */

function ChartIcon() {
  return (
    <svg className="h-[14px] w-[14px]" viewBox="0 0 14 14" fill="none">
      <rect x="0.5" y="0.5" width="10" height="9" fill="#fff" stroke="#5b9bf0" />
      <path d="M0 1h11" stroke="#5b9bf0" strokeWidth="2" strokeDasharray="2 1" />
      <path d="M2 5l1.500-1.500L5 5.500" stroke="#2c75de" />
      <rect x="3.5" y="5.5" width="10" height="8" fill="#fff" stroke="#5b9bf0" />
      <path d="M3 6h11" stroke="#5b9bf0" strokeWidth="2" strokeDasharray="2 1" />
      <path d="M5.500 8.500l1.500 3 1.500-3 1.500 3 1.500-2" stroke="#2c75de" />
    </svg>
  );
}

function MinGlyph() {
  return (
    <svg className="h-[10px] w-[12px]" viewBox="0 0 12 10">
      <rect x="0.500" y="5.500" width="10" height="4" rx="1" fill="#fff" stroke="#4b5566" />
    </svg>
  );
}

function MaxGlyph() {
  return (
    <svg className="h-[10px] w-[12px]" viewBox="0 0 12 10">
      <rect x="0.500" y="0.500" width="10" height="8" rx="1" fill="#fff" stroke="#4b5566" />
      <rect x="3.500" y="3.500" width="4" height="2" fill="#c8d6e5" stroke="#4b5566" />
    </svg>
  );
}

function CloseGlyph() {
  return (
    <svg className="h-[10px] w-[12px]" viewBox="0 0 12 10" fill="none">
      <path d="M2.500 1l7 8M9.500 1l-7 8" stroke="#4b5566" strokeWidth="4.500" />
      <path d="M3 1.500l6 7M9 1.500l-6 7" stroke="#fff" strokeWidth="2.500" />
    </svg>
  );
}

function ChartWindow({ chart }: { chart: Chart }) {
  const button = clsx(
    "flex h-[17px] w-[30px] items-center justify-center rounded-[2px] border",
    chart.active
      ? "border-[#5f7791] bg-linear-to-b from-[#bfd3e8] from-50% to-[#a3bdd8] to-50%"
      : "border-[#8795ae] bg-linear-to-b from-[#cbd9e8] to-[#c9d7e8]",
  );

  return (
    <section
      className={clsx(
        "flex flex-col rounded-t-[6px] border px-[8px] pb-[9px]",
        chart.active
          ? "border-black bg-[#b9d1ea] bg-linear-to-b from-[#98b4d1] to-[#b9d1ea] to-[30px] text-black shadow-[inset_-1px_-1px_0_#35c8e8,inset_1px_1px_0_#fff]"
          : "border-[#4c4c4c] bg-[#d7e4f2] bg-linear-to-b from-[#bfcddb] to-[#d7e4f2] to-[30px] text-[#4a4a4a] shadow-[inset_1px_1px_0_#f4f8fc]",
      )}
    >
      <header className="flex h-[29px] shrink-0 items-center pt-[4px] pr-px pl-[2px]">
        <ChartIcon />
        <h2 className="ml-[5px] flex-1">{chart.symbol}</h2>
        <div className="flex gap-[3px]">
          <button aria-label="Minimize" className={button}>
            <MinGlyph />
          </button>
          <button aria-label="Maximize" className={button}>
            <MaxGlyph />
          </button>
          <button
            aria-label="Close"
            className={
              chart.active
                ? "flex h-[17px] w-[30px] items-center justify-center rounded-[2px] border border-[#5a1a1a] bg-linear-to-b from-[#e08d80] from-50% to-[#b83a25] to-50%"
                : button
            }
          >
            <CloseGlyph />
          </button>
        </div>
      </header>
      <div className="flex flex-1 flex-col border border-t-[#a0a0a0] border-l-[#a0a0a0] border-r-[#e3e3e3] border-b-[#e3e3e3]">
        <ChartArea chart={chart} />
      </div>
    </section>
  );
}

/* ---------- toolbar ---------- */

function Icon({ children }: { children: ReactNode }) {
  return (
    <svg className="size-[20px]" viewBox="0 0 20 20" fill="none">
      {children}
    </svg>
  );
}

const AXES = "M5.500 3v15M2 16.500h15M4 5l1.500-2L7 5M15 15l2 1.500-2 1.500";

const ICONS: Record<string, ReactNode> = {
  "New chart": (
    <>
      <rect x="2.500" y="2.500" width="15" height="15" rx="1" fill="#f4f9ff" stroke="#5b9ad8" />
      <path d="M3 4h14" stroke="#8fbdea" strokeWidth="2" />
      <path d="M8 5l4 4H9.500v3h-3V9H4z" fill="#2fae3b" stroke="#137a1e" strokeWidth="0.600" />
      <path d="M13 16l-4-4h2.500V9h3v3H17z" fill="#ef7b4d" stroke="#b23a12" strokeWidth="0.600" />
    </>
  ),
  Profiles: (
    <>
      <path d="M2 4.500L3.500 2.500h4L9 4.500h6v8H2z" fill="#f8dd6a" stroke="#b98f1c" />
      <path d="M5.500 12v6" stroke="#444" strokeDasharray="1 1" />
      <path d="M13 6.500l2 4 4.500.5-3.300 3 1 4.500-4.200-2.300-4 2.300 1-4.500-3.300-3 4.300-.500z" fill="#fbe25a" stroke="#a8821a" />
    </>
  ),
  "Market watch": (
    <>
      <rect x="2.500" y="3.500" width="15" height="13" rx="1" fill="#fff" stroke="#2d6fc4" />
      <path d="M3.500 4v12" stroke="#2d6fc4" strokeWidth="2" />
      <path d="M6 6.500h2M6 10.500h2" stroke="#d22" />
      <path d="M6 8.500h2M6 12.500h2M6 14.500h2" stroke="#333" />
      <path d="M9 6.500h7M9 8.500h7M9 10.500h7M9 12.500h7" stroke="#b9cdea" strokeWidth="0.700" />
    </>
  ),
  Navigator: (
    <>
      <path d="M2 11l8 6.500 8-6v-2L10 15.500 2 9z" fill="#fff3c0" stroke="#8f6410" strokeWidth="0.800" />
      <path d="M2 9.500L8.500 2.500l9.500 7-8 6z" fill="#e2ab2b" stroke="#8f6410" />
      <path d="M4.500 9.500l5-4.500" stroke="#fbe08a" strokeWidth="1.500" />
    </>
  ),
  "Bar chart": (
    <>
      <path d={AXES} stroke="#4d4d4d" />
      <path d="M11.500 4v9M11.500 4.500H14M9 12.500h2.500" stroke="#178a22" strokeWidth="1.400" />
    </>
  ),
  "Auto scroll": (
    <>
      <path d={AXES} stroke="#4d4d4d" />
      <path d="M9.500 5.500l5 4-5 4z" fill="#35c748" stroke="#137a1e" />
    </>
  ),
  "Chart shift": (
    <>
      <path d={AXES} stroke="#4d4d4d" />
      <path d="M11.500 3v11" stroke="#1c6aa8" strokeWidth="1.500" />
      <path d="M18 8.500h-4M16 6l-3 2.500 3 2.500z" stroke="#b23112" fill="#b23112" />
    </>
  ),
  "Zoom out": (
    <>
      <path d="M12 12l5.500 5.500" stroke="#9b7213" strokeWidth="4" />
      <path d="M12 12l5.500 5.500" stroke="#f2cc46" strokeWidth="2.500" />
      <circle cx="8" cy="8" r="5.500" fill="#cfe6fa" stroke="#4a90c8" strokeWidth="1.300" />
      <path d="M5 8h6" stroke="#1c5c99" strokeWidth="2" />
    </>
  ),
  "Zoom in": (
    <>
      <path d="M12 12l5.500 5.500" stroke="#9b7213" strokeWidth="4" />
      <path d="M12 12l5.500 5.500" stroke="#f2cc46" strokeWidth="2.500" />
      <circle cx="8" cy="8" r="5.500" fill="#cfe6fa" stroke="#4a90c8" strokeWidth="1.300" />
      <path d="M5 8h6M8 5v6" stroke="#1c5c99" strokeWidth="2" />
    </>
  ),
  Candlesticks: (
    <>
      <path d={AXES} stroke="#4d4d4d" />
      <path d="M11.500 2v12" stroke="#137a1e" />
      <rect x="9.500" y="4.500" width="4" height="7" fill="#35d748" stroke="#137a1e" />
    </>
  ),
  "Line chart": (
    <>
      <path d={AXES} stroke="#4d4d4d" />
      <path d="M5 12c2-4 4-6 6-5s3 3 6 4" stroke="#2a9c35" strokeWidth="1.300" />
    </>
  ),
  Cursor: <path d="M7 3v13l3-2.500 2 4.500 2-1-2-4h4z" fill="#4a4a4a" />,
  Crosshair: <path d="M10.500 3v6M10.500 12v6M3 10.500h6M12 10.500h6M10 10.500h1" stroke="#4a4a4a" />,
  Trendline: <path d="M4 16.500L16 4.500" stroke="#4a4a4a" />,
  "Vertical line": <path d="M9.500 4v13" stroke="#4a4a4a" />,
  "Horizontal line": <path d="M4 10.500h12" stroke="#4a4a4a" />,
  "Fibonacci fan": (
    <>
      <path d="M3 16.500L14 3M3 16.500L16 6.500M3 16.500L15 10M3 16.500L9 4" stroke="#5a5a5a" />
      <path d="M14.500 19v-5.500H18M14.500 16H17" stroke="#333" />
    </>
  ),
  "Fibonacci channel": (
    <>
      <path d="M2 2.500h16M2 5.500h16M2 9.500h16" stroke="#4a4a4a" strokeDasharray="1 1" />
      <path d="M3 18l5-6 4 2" stroke="#777" strokeWidth="1.300" />
      <path d="M14.500 19v-5.500H18M14.500 16H17" stroke="#333" />
    </>
  ),
  Rectangle: <rect x="4.500" y="6.500" width="12" height="8" rx="1" fill="#999" stroke="#4a4a4a" />,
  "Fibonacci levels": (
    <>
      <path d="M3 3.500h14M3 6.500h14M3 10.500h14M3 14.500h9" stroke="#4a4a4a" strokeDasharray="1 1" />
      <path d="M14.500 19v-5.500H18M14.500 16H17" stroke="#333" />
    </>
  ),
};

const PRESSED = ["Bar chart", "Auto scroll", "Chart shift", "Cursor", "M1"];

function ToolButton({ name }: { name: string }) {
  const pressed = PRESSED.includes(name);
  return (
    <button
      aria-label={name}
      aria-pressed={pressed}
      className={clsx(
        "mx-px flex h-[23px] w-[26px] items-center justify-center border",
        pressed ? "border-t-[#a0a0a0] border-l-[#a0a0a0] border-r-white border-b-white bg-[#f8f8f8]" : "border-transparent",
      )}
    >
      {ICONS[name] ? <Icon>{ICONS[name]}</Icon> : name}
    </button>
  );
}

function ToolGroup({ children }: { children: ReactNode }) {
  return (
    <div className="flex h-full items-center border-r border-l border-r-[#a0a0a0] border-l-white pl-px">
      <span className="mr-[2px] h-[20px] w-[3px] bg-[repeating-linear-gradient(#a0a0a0_0_1px,#f0f0f0_1px_2px)]" />
      {children}
    </div>
  );
}

function Separator() {
  return <span className="mr-[4px] ml-[3px] h-[21px] w-px bg-[#a0a0a0]" />;
}

function Toolbar() {
  return (
    <div className="flex h-[30px] shrink-0 items-center border-t border-t-[#a0a0a0] border-b-2 border-b-[#808080] bg-[#f0f0f0] pl-px font-['DejaVu_Sans_Condensed','DejaVu_Sans',sans-serif] text-[9px] text-[#333] shadow-[inset_0_1px_0_#fff]">
      <ToolGroup>
        <Separator />
        <ToolButton name="New chart" />
        <ToolButton name="Profiles" />
        <ToolButton name="Market watch" />
        <Separator />
        <ToolButton name="Navigator" />
      </ToolGroup>
      <ToolGroup>
        <ToolButton name="Bar chart" />
        <Separator />
        <ToolButton name="Auto scroll" />
        <ToolButton name="Chart shift" />
        <ToolButton name="Zoom out" />
        <ToolButton name="Zoom in" />
        <ToolButton name="Candlesticks" />
        <ToolButton name="Line chart" />
        <Separator />
      </ToolGroup>
      <ToolGroup>
        <ToolButton name="Cursor" />
        <ToolButton name="Crosshair" />
        <ToolButton name="Trendline" />
        <ToolButton name="Vertical line" />
        <ToolButton name="Horizontal line" />
        <ToolButton name="Fibonacci fan" />
        <ToolButton name="Fibonacci channel" />
        <ToolButton name="Rectangle" />
        <ToolButton name="Fibonacci levels" />
        <Separator />
      </ToolGroup>
      <ToolGroup>
        {["MN", "W1", "D1", "H4", "H1", "M30", "M15", "M5", "M1"].map((frame) => (
          <ToolButton key={frame} name={frame} />
        ))}
      </ToolGroup>

      <div className="ml-auto flex items-center gap-[12px] pr-[6px]">
        <button aria-label="Search">
          <svg className="size-[16px]" viewBox="0 0 16 16" fill="none">
            <path d="M8 8.500L3 13.500" stroke="#2a5fd0" strokeWidth="3" />
            <circle cx="10" cy="6" r="4" fill="#e8f0ff" stroke="#2a5fd0" strokeWidth="1.500" />
          </svg>
        </button>
        <button aria-label="Messages">
          <svg className="h-[16px] w-[22px]" viewBox="0 0 22 16" fill="#ececec" stroke="#8a8a8a">
            <path d="M14 1c4 0 7 1.800 7 4.500 0 1.700-1 3-3 3.700L18.500 12 15.500 9.800C11 10 8 8 8 5.500 8 2.800 10.500 1 14 1z" />
            <path d="M6 7c3 0 5.500 1.500 5.500 3.500S9.500 14 6.500 14L4 15.800l.3-2.300C2 13 1 12 1 10.500 1 8.500 3 7 6 7z" />
          </svg>
        </button>
      </div>
    </div>
  );
}

/* ---------- application frame ---------- */

function TitleBar() {
  return (
    <div className="flex h-[21px] shrink-0 items-center border-b border-b-[#9a9a9a] bg-[#14181f] bg-linear-to-r from-[#8b8b8b] via-[#7c8084] via-20% to-[#12161d] to-24% pl-[2px]">
      <svg className="size-[16px]" viewBox="0 0 16 16">
        <circle cx="8" cy="8" r="7.500" fill="#e9e2d8" />
        <path d="M1 9c0-5 4-8 8-8l5 4-2 6-6 4c-3-1-5-3-5-6z" fill="#3a2c26" />
        <path d="M3 7l3-3 2 3-2 4z" fill="#a65a2c" />
        <path d="M8 8l3-3 2 3-3 5z" fill="#6b4634" />
      </svg>
      <h1 className="ml-[3px] flex-1 text-black">120260946: FXOpen-ECN Demo Server - Demo Account - GBPJPY,M1</h1>
      <div className="mr-[3px] flex h-[18px] self-start overflow-hidden rounded-b-[4px] border border-t-0 border-[#b4b8bd]">
        <button
          aria-label="Minimize"
          className="flex w-[28px] items-center justify-center border-r border-r-[#b4b8bd] bg-linear-to-b from-[#80858c] from-50% to-[#33373d] to-50%"
        >
          <MinGlyph />
        </button>
        <button
          aria-label="Restore"
          className="flex w-[27px] items-center justify-center border-r border-r-[#b4b8bd] bg-linear-to-b from-[#80858c] from-50% to-[#33373d] to-50%"
        >
          <svg className="size-[12px]" viewBox="0 0 12 12" fill="none">
            <path d="M4 1.500h7v7" stroke="#fff" strokeWidth="1.500" />
            <rect x="1.500" y="4" width="6.500" height="6.500" stroke="#fff" strokeWidth="2" />
          </svg>
        </button>
        <button
          aria-label="Close"
          className="flex w-[47px] items-center justify-center bg-linear-to-b from-[#d08a7c] from-50% to-[#a52c14] to-50%"
        >
          <CloseGlyph />
        </button>
      </div>
    </div>
  );
}

function MenuBar() {
  return (
    <nav className="flex h-[21px] shrink-0 items-center gap-[16px] bg-[#f0f0f0] pl-[7px]">
      {["File", "View", "Insert", "Charts", "Tools", "Window", "Help"].map((item) => (
        <button key={item}>{item}</button>
      ))}
    </nav>
  );
}

function TabBar() {
  const tabs = ["USDJPY,M1", "EURJPY,M1", "GBPJPY,M1", "AUDJPY,M1", "CADJPY,M1", "NZDJPY,M1"];
  return (
    <div className="flex h-[21px] shrink-0 items-stretch border-t border-t-black bg-[#f0f0f0] pl-px">
      <div role="tablist" className="flex border-l border-l-[#808080] pl-[6px]">
        {tabs.map((tab) => (
          <button
            key={tab}
            role="tab"
            aria-selected={tab === "GBPJPY,M1"}
            className={
              tab === "GBPJPY,M1"
                ? "-mt-px -ml-px border border-t-0 border-black bg-white px-[10px] text-black"
                : "my-[2px] border-r border-r-[#808080] px-[10px] text-[#808080]"
            }
          >
            {tab}
          </button>
        ))}
      </div>
      <div className="ml-auto flex items-center gap-[14px] pr-[9px]">
        <button aria-label="Scroll tabs left">
          <svg className="h-[7px] w-[4px]" viewBox="0 0 4 7">
            <path d="M4 0v7L0 3.500z" fill="#808080" />
          </svg>
        </button>
        <button aria-label="Scroll tabs right">
          <svg className="h-[7px] w-[4px]" viewBox="0 0 4 7">
            <path d="M0 0v7l4-3.500z" fill="#808080" />
          </svg>
        </button>
      </div>
    </div>
  );
}

function StatusBar() {
  const ticks = Array.from({ length: 8 }, (_, i) => i);
  return (
    <footer className="flex h-[23px] shrink-0 items-center border-t border-t-white bg-[#f0f0f0] py-[3px] pl-[2px] text-[11px]">
      <span className="flex-1">For Help, press F1</span>
      <div className="flex items-center self-stretch [&>span]:h-full [&>span]:border-l [&>span]:border-l-[#a0a0a0]">
        <span className="flex w-[116px] items-center pl-[5px]">Market Overview</span>
        <span className="w-[102px]" />
        <span className="w-[72px]" />
        <span className="w-[71px]" />
        <span className="w-[68px]" />
        <span className="w-[70px]" />
        <span className="w-[66px]" />
        <span className="flex w-[129px] items-center gap-[3px] pl-[5px]">
          <svg className="h-[13px] w-[23px]" viewBox="0 0 23 13" shapeRendering="crispEdges">
            {ticks.map((i) => (
              <g key={i}>
                <rect x={i * 3} y="0" width="2" height={9 - i} fill="#5f7a10" />
                <rect x={i * 3} y={10 - i} width="2" height={3 + i} fill="#0b3c5d" />
              </g>
            ))}
          </svg>
          3997/8 kb
        </span>
      </div>
    </footer>
  );
}

export default function App() {
  return (
    <div className="flex min-h-screen flex-col bg-[#ababab] font-['Open_Sans','Segoe_UI',sans-serif] text-[12px] leading-[16px] text-black">
      <TitleBar />
      <MenuBar />
      <Toolbar />
      <main className="grid flex-1 auto-rows-fr grid-cols-3 bg-[#8c8c8c] pr-[4px] pl-[2px]">
        {CHARTS.map((chart) => (
          <ChartWindow key={chart.symbol} chart={chart} />
        ))}
      </main>
      <TabBar />
      <StatusBar />
    </div>
  );
}
